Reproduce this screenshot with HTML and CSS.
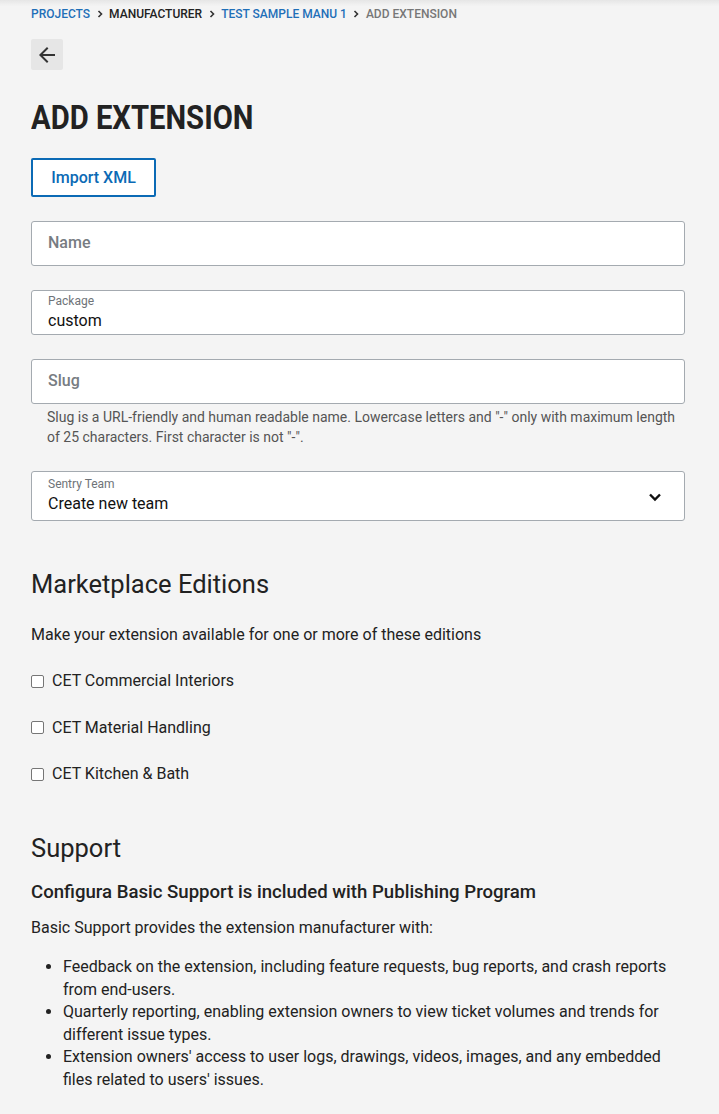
FILE: index.html
```html
<!DOCTYPE html>
<html>
<head>
<meta charset="utf-8">
<link rel="stylesheet" href="styles.css">
</head>
<body>
<div class="topshade"></div>
<main class="page">
  <nav class="crumbs">
    <a class="crumb link">Projects</a>
    <span class="sep"><svg width="8" height="8" viewBox="0 0 8 8"><path d="M2.5 1 L5.5 4 L2.5 7" fill="none" stroke="#333" stroke-width="1.6"/></svg></span>
    <a class="crumb dark">Manufacturer</a>
    <span class="sep"><svg width="8" height="8" viewBox="0 0 8 8"><path d="M2.5 1 L5.5 4 L2.5 7" fill="none" stroke="#333" stroke-width="1.6"/></svg></span>
    <a class="crumb link">Test Sample Manu 1</a>
    <span class="sep"><svg width="8" height="8" viewBox="0 0 8 8"><path d="M2.5 1 L5.5 4 L2.5 7" fill="none" stroke="#333" stroke-width="1.6"/></svg></span>
    <span class="crumb current">Add Extension</span>
  </nav>

  <button class="back" aria-label="Back">
    <svg width="24" height="24" viewBox="0 0 24 24"><path d="M20 11H7.83l5.59-5.59L12 4l-8 8 8 8 1.41-1.41L7.83 13H20v-2z" fill="#333"/></svg>
  </button>

  <h1 class="title">ADD EXTENSION</h1>

  <button class="import">Import XML</button>

  <div class="form">
    <div class="field"><span class="placeholder">Name</span></div>
    <div class="field labeled">
      <span class="label">Package</span>
      <span class="value">custom</span>
    </div>
    <div class="group">
      <div class="field"><span class="placeholder">Slug</span></div>
      <p class="help">Slug is a URL-friendly and human readable name. Lowercase letters and "-" only with maximum length of 25 characters. First character is not "-".</p>
    </div>
    <div class="field labeled select">
      <div class="select-text">
        <span class="label">Sentry Team</span>
        <span class="value">Create new team</span>
      </div>
      <svg class="chev" width="14" height="10" viewBox="0 0 14 10"><path d="M2 2.5 L7 7.5 L12 2.5" fill="none" stroke="#111" stroke-width="2.4"/></svg>
    </div>
  </div>

  <h2 class="h2 editions-title">Marketplace Editions</h2>
  <p class="text">Make your extension available for one or more of these editions</p>
  <div class="checks">
    <label class="check"><span class="box"></span>CET Commercial Interiors</label>
    <label class="check"><span class="box"></span>CET Material Handling</label>
    <label class="check"><span class="box"></span>CET Kitchen &amp; Bath</label>
  </div>

  <h2 class="h2 support-title">Support</h2>
  <h3 class="h3">Configura Basic Support is included with Publishing Program</h3>
  <p class="text">Basic Support provides the extension manufacturer with:</p>
  <ul class="list">
    <li>Feedback on the extension, including feature requests, bug reports, and crash reports from end-users.</li>
    <li>Quarterly reporting, enabling extension owners to view ticket volumes and trends for different issue types.</li>
    <li>Extension owners' access to user logs, drawings, videos, images, and any embedded files related to users' issues.</li>
  </ul>
</main>
</body>
</html>
```

FILE: styles.css
```css
* { box-sizing: border-box; }
html, body { margin: 0; padding: 0; }
body {
  background: #f4f4f4;
  font-family: Roboto, "Liberation Sans", sans-serif;
  color: #222;
}
.topshade {
  position: fixed;
  top: 0; left: 0; right: 0;
  height: 6px;
  background: linear-gradient(#e6e6e6, rgba(244,244,244,0));
}
.page {
  width: 654px;
  margin-left: 31px;
  padding-top: 7px;
}
.crumbs {
  display: flex;
  align-items: center;
  height: 14px;
  font-size: 12px;
  font-weight: 500;
  text-transform: uppercase;
}
.crumb.link { color: #1f6fb8; }
.crumb.dark { color: #222; }
.crumb.current { color: #777; }
.sep { display: flex; width: 19px; justify-content: center; }
.back {
  display: flex;
  align-items: center;
  justify-content: center;
  width: 32px;
  height: 31px;
  margin-top: 18px;
  padding: 0;
  border: none;
  border-radius: 2px;
  background: #e6e6e6;
}
.title {
  margin: 29px 0 0;
  font-size: 34px;
  line-height: 36px;
  font-weight: 700;
  color: #222;
  transform: scaleX(0.86);
  transform-origin: left center;
}
.import {
  display: block;
  margin-top: 23px;
  width: 125px;
  height: 39px;
  border: 2px solid #0b6ab5;
  border-radius: 2px;
  background: #fff;
  color: #0b6ab5;
  font-family: Roboto, sans-serif;
  font-size: 16px;
  font-weight: 500;
  padding: 0;
}
.form {
  margin-top: 24px;
  display: flex;
  flex-direction: column;
  gap: 24px;
}
.field {
  height: 45px;
  background: #fff;
  border: 1px solid #a4aab0;
  border-radius: 3px;
  padding: 0 16px;
  display: flex;
  align-items: center;
}
.placeholder { color: #777c82; font-size: 16px; font-weight: 500; margin-top: -2px; }
.field.labeled {
  flex-direction: column;
  align-items: flex-start;
  justify-content: flex-start;
  padding-top: 3px;
}
.label { font-size: 12px; line-height: 14px; color: #6e7378; }
.value { font-size: 16px; line-height: 20px; color: #111; margin-top: 3px; }
.group { display: flex; flex-direction: column; }
.help {
  margin: 3px 0 0;
  padding: 0 8px 0 16px;
  font-size: 14px;
  line-height: 20px;
  color: #555;
}
.field.select {
  height: 50px;
  flex-direction: row;
  align-items: center;
  justify-content: space-between;
  padding: 0 22px 0 16px;
}
.select-text { display: flex; flex-direction: column; margin-top: -2px; }
.chev { display: block; margin-top: 2px; }
.h2 {
  margin: 0;
  font-size: 25.5px;
  line-height: 30px;
  font-weight: 400;
  color: #222;
}
.editions-title { margin-top: 48px; }
.text {
  margin: 0;
  font-size: 16px;
  line-height: 22px;
  color: #222;
}
.editions-title + .text { margin-top: 25px; }
.checks {
  margin-top: 24px;
  display: flex;
  flex-direction: column;
  gap: 24.5px;
}
.check {
  display: flex;
  align-items: center;
  font-size: 16px;
  line-height: 22px;
  color: #222;
}
.box {
  width: 13px;
  height: 13px;
  border: 1px solid #767676;
  border-radius: 2px;
  background: #fff;
  margin-right: 8px;
}
.support-title { margin-top: 48px; }
.h3 {
  margin: 17px 0 0;
  font-size: 18.6px;
  line-height: 24px;
  font-weight: 500;
  color: #222;
}
.h3 + .text { margin-top: 13px; }
.list {
  margin: 17px 0 0;
  padding-left: 32px;
  font-size: 16px;
  line-height: 22.5px;
  color: #222;
}
```
